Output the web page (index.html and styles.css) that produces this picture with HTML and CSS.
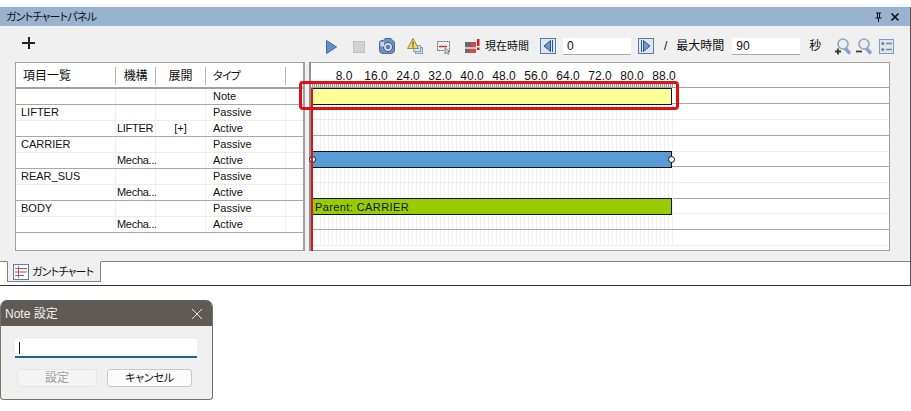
FILE: index.html
```html
<!DOCTYPE html>
<html lang="ja">
<head>
<meta charset="utf-8">
<title>ガントチャートパネル</title>
<link rel="stylesheet" href="styles.css">
</head>
<body>
<section class="panel">
  <header class="titlebar">
    <span class="kana">ガントチャートパネル</span>
    <span class="title-tools">
      <svg class="ic-pin" width="9" height="10" viewBox="0 0 9 10"><path d="M2 0.500h5v1h-1v4h1.500v1h-6v-1H3v-4H2zM4 1.500v4h1v-4zM4 6.500h1V10H4z" fill="#111"/></svg>
      <svg width="10" height="10" viewBox="0 0 10 10"><path d="M1.500 1.500l7 7M8.500 1.500l-7 7" stroke="#111" stroke-width="1.700" fill="none"/></svg>
    </span>
  </header>
  <div class="toolbar">
    <span class="plus"></span>
    <svg class="t-play" width="11" height="14" viewBox="0 0 11 14"><path d="M0.500 0.500L10.500 7 0.500 13.500z" fill="#5f8fc8" stroke="#3f6ea8"/></svg>
    <span class="t-stop"></span>
    <svg class="t-cam" width="16" height="16" viewBox="0 0 16 16"><path d="M0.500 5a2.500 2.500 0 0 1 2.500-2.500h1.500L6 0.500h6l1.500 2A2.500 2.500 0 0 1 15.500 5v7a3.500 3.500 0 0 1-3.500 3.500H4A3.500 3.500 0 0 1 0.500 12z" fill="#6f93bb" stroke="#4a6c94"/><circle cx="9" cy="9" r="4.500" fill="#d5e2f0" stroke="#34557d"/><circle cx="9" cy="9" r="2.300" fill="#5a7da6"/><rect x="1.500" y="4" width="3.500" height="4.500" fill="#c6d7ea"/></svg>
    <svg class="t-warn" width="16" height="16" viewBox="0 0 16 16"><rect x="8.500" y="9.500" width="7" height="6" fill="#c9d6ea" stroke="#8aa2c4"/><rect x="6.500" y="7.500" width="7" height="6" fill="#dbe4f2" stroke="#8aa2c4"/><path d="M6 0.500L11.500 10.500H0.500z" fill="#f6dc62" stroke="#9c8a3c"/><path d="M6 3.500v4M6 8v1.500" stroke="#333" fill="none"/></svg>
    <svg class="t-sel" width="15" height="15" viewBox="0 0 15 15"><rect x="0.500" y="1.500" width="12" height="9" fill="none" stroke="#667" stroke-dasharray="2 1"/><path d="M2 6.500h8" stroke="#d03030" stroke-width="1.500"/><path d="M8 8l0 6 1.500-1.500 1.500 2 1-.8-1.300-2H13z" fill="#ddd" stroke="#666" stroke-width=".7"/></svg>
    <svg class="t-flag" width="15" height="14" viewBox="0 0 15 14"><rect x="0" y="3" width="11" height="11" fill="#6a6a6a"/><rect x="6" y="3" width="5" height="5" fill="#d84848"/><rect x="0" y="8" width="11" height="2" fill="#c4c4c4"/><rect x="4" y="10" width="7" height="4" fill="#d84848"/><rect x="12" y="0" width="2.500" height="7" fill="#d02020"/><rect x="12" y="8.500" width="2.500" height="2.500" fill="#d02020"/></svg>
    <span class="t-label t-now">現在時間</span>
    <button class="stepper" type="button"><svg width="16" height="16" viewBox="0 0 16 16"><rect x="0.500" y="0.500" width="15" height="15" fill="#dfe6f0" stroke="#5c7ba8"/><path d="M10.500 2.500v11L4 8z" fill="#6f97c9" stroke="#2f568c"/><path d="M12.500 2v12" stroke="#2f568c"/></svg></button>
    <span class="field t-cur">0</span>
    <button class="stepper t-next" type="button"><svg width="16" height="16" viewBox="0 0 16 16"><rect x="0.500" y="0.500" width="15" height="15" fill="#dfe6f0" stroke="#5c7ba8"/><path d="M5.500 2.500v11L12 8z" fill="#6f97c9" stroke="#2f568c"/><path d="M3.500 2v12" stroke="#2f568c"/></svg></button>
    <span class="t-label t-slash">/</span>
    <span class="t-label t-max">最大時間</span>
    <span class="field t-maxv">90</span>
    <span class="t-label t-sec">秒</span>
    <svg class="t-zp" width="16" height="17" viewBox="0 0 16 17"><path d="M9.500 9.500l4.500 5" stroke="#7fa3d4" stroke-width="3.400" stroke-linecap="round"/><circle cx="8" cy="6" r="5" fill="#e6eef7" stroke="#98a4b0" stroke-width="1.600"/><path d="M0 13.500h6M3 10.500v6" stroke="#3a3a3a" stroke-width="1.800"/></svg>
    <svg class="t-zm" width="16" height="17" viewBox="0 0 16 17"><path d="M9.500 9.500l4.500 5" stroke="#7fa3d4" stroke-width="3.400" stroke-linecap="round"/><circle cx="8" cy="6" r="5" fill="#e6eef7" stroke="#98a4b0" stroke-width="1.600"/><path d="M0 13.500h6" stroke="#3a3a3a" stroke-width="1.800"/></svg>
    <svg class="t-list" width="15" height="15" viewBox="0 0 15 15"><rect x="0.500" y="0.500" width="14" height="14" fill="#dce6f3" stroke="#7f9cc4"/><circle cx="3.800" cy="4.500" r="1.600" fill="#7c8794"/><circle cx="3.800" cy="10.500" r="1.600" fill="#7c8794"/><path d="M7 4.500h6M7 10.500h6" stroke="#7c8794" stroke-width="1.400"/></svg>
  </div>
  <div class="split">
    <div class="grid-table">
      <div class="row head">
        <span class="c1 sep">項目一覧</span><span class="c2 sep">機構</span><span class="c3 sep">展開</span><span class="c4 sep kana">タイプ</span><span class="c5 sep"></span>
      </div>
      <div class="row major"><span class="c1"></span><span class="c2"></span><span class="c3"></span><span class="c4">Note</span><span class="c5"></span></div>
      <div class="row minor"><span class="c1">LIFTER</span><span class="c2"></span><span class="c3"></span><span class="c4">Passive</span><span class="c5"></span></div>
      <div class="row major"><span class="c1"></span><span class="c2">LIFTER</span><span class="c3 expand">[+]</span><span class="c4">Active</span><span class="c5"></span></div>
      <div class="row minor"><span class="c1">CARRIER</span><span class="c2"></span><span class="c3"></span><span class="c4">Passive</span><span class="c5"></span></div>
      <div class="row major"><span class="c1"></span><span class="c2">Mecha...</span><span class="c3"></span><span class="c4">Active</span><span class="c5"></span></div>
      <div class="row minor"><span class="c1">REAR_SUS</span><span class="c2"></span><span class="c3"></span><span class="c4">Passive</span><span class="c5"></span></div>
      <div class="row major"><span class="c1"></span><span class="c2">Mecha...</span><span class="c3"></span><span class="c4">Active</span><span class="c5"></span></div>
      <div class="row minor"><span class="c1">BODY</span><span class="c2"></span><span class="c3"></span><span class="c4">Passive</span><span class="c5"></span></div>
      <div class="row major"><span class="c1"></span><span class="c2">Mecha...</span><span class="c3"></span><span class="c4">Active</span><span class="c5"></span></div>
    </div>
    <div class="chart">
      <div class="ruler">
        <div class="ticks-labels"><span>8.0</span><span>16.0</span><span>24.0</span><span>32.0</span><span>40.0</span><span>48.0</span><span>56.0</span><span>64.0</span><span>72.0</span><span>80.0</span><span>88.0</span></div>
        <div class="ticks"></div>
      </div>
      <div class="track major nogrid"><div class="bar note"></div></div>
      <div class="track minor"></div>
      <div class="track major"></div>
      <div class="track minor"></div>
      <div class="track major"><div class="bar mech"><i class="knob knob-l"></i><i class="knob knob-r"></i></div></div>
      <div class="track minor"></div>
      <div class="track major"></div>
      <div class="track minor"><div class="bar body-bar">Parent: CARRIER</div></div>
      <div class="track major"></div>
      <div class="track minor"></div>
    </div>
    <div class="timeline"></div>
    <div class="highlight"></div>
  </div>
  <div class="tabbar">
    <div class="tab">
      <svg width="16" height="16" viewBox="0 0 16 16"><rect x="0.500" y="0.500" width="15" height="15" fill="#fff" stroke="#5c7ba8"/><path d="M2 4.500h5M6 4.500h8M2 8h12M2 11.500h9" stroke="#d04040"/><path d="M5.500 2v12" stroke="#5c7ba8"/></svg>
      <span class="kana">ガントチャート</span>
    </div>
  </div>
</section>
<section class="dialog">
  <header class="dlg-title">
    <span>Note 設定</span>
    <svg width="12" height="12" viewBox="0 0 12 12"><path d="M1 1l10 10M11 1L1 11" stroke="#e8e6e3" stroke-width="1" fill="none"/></svg>
  </header>
  <div class="dlg-body">
    <div class="dlg-input"><span class="caret"></span></div>
    <div class="dlg-buttons">
      <button class="dlg-btn disabled" type="button">設定</button>
      <button class="dlg-btn" type="button"><span class="kana btn-kana">キャンセル</span></button>
    </div>
  </div>
</section>
</body>
</html>
```

FILE: styles.css
```css
* { box-sizing: border-box; }
html, body { margin: 0; padding: 0; background: #fff; }
body {
  width: 911px;
  height: 411px;
  overflow: hidden;
  font: 12px/16px "Liberation Sans", "Noto Sans CJK JP", sans-serif;
  color: #111;
}
.kana {
  font-size: 11px;
  font-feature-settings: "palt";
  letter-spacing: -0.8px;
  white-space: nowrap;
}
.btn-kana { letter-spacing: -0.2px; }

.panel {
  margin-top: 7px;
  width: 911px;
  height: 279px;
  background: #f0f0f0;
  border-right: 1px solid #555;
  border-bottom: 1px solid #333;
  box-shadow: 0 -3px 0 #f6f6f6;
  display: flex;
  flex-direction: column;
}
.titlebar {
  height: 19px;
  flex: none;
  background: #98b3d0;
  display: flex;
  align-items: center;
  justify-content: space-between;
  padding: 0 10px 0 6px;
}
.title-tools { display: flex; align-items: center; gap: 7px; }

.toolbar {
  height: 36px;
  flex: none;
  display: flex;
  align-items: center;
  padding-top: 2px;
  font-size: 12px;
}
.plus {
  width: 13px;
  height: 12px;
  margin: -5px 0 0 22px;
  background:
    linear-gradient(#222, #222) center / 100% 2px no-repeat,
    linear-gradient(#222, #222) center / 2px 100% no-repeat;
}
.t-play { margin-left: 291px; margin-top: 4px; }
.t-stop {
  width: 12px;
  height: 12px;
  margin-left: 16px;
  margin-top: 4px;
  background: #d2d2d2;
  border: 1px solid #c0c0c0;
}
.t-cam { margin-left: 14px; margin-top: 2px; }
.t-warn { margin-left: 12px; margin-top: 1px; }
.t-sel { margin-left: 14px; margin-top: 4px; }
.t-flag { margin-left: 13px; margin-top: 2px; }
.t-label { white-space: nowrap; }
.t-now { margin-left: 5px; margin-top: 2px; font-size: 11px; }
.stepper {
  padding: 0;
  border: 0;
  background: none;
  width: 16px;
  height: 16px;
  display: block;
  margin-top: 2px;
}
.toolbar > .stepper:first-of-type { margin-left: 11px; }
.field {
  height: 17px;
  background: #fff;
  border-bottom: 1px solid #aaa;
  padding-left: 4px;
  line-height: 16px;
  margin-top: 2px;
}
.t-cur { width: 68px; margin-left: 7px; }
.t-next { margin-left: 7px; }
.t-slash { margin-left: 10px; margin-top: 2px; }
.t-max { margin-left: 9px; margin-top: 2px; }
.t-maxv { width: 68px; margin-left: 8px; }
.t-sec { margin-left: 9px; margin-top: 2px; }
.t-zp { margin-left: 14px; margin-top: 2px; }
.t-zm { margin-left: 5px; margin-top: 2px; }
.t-list { margin-left: 7px; margin-top: 2px; }

.split {
  position: relative;
  height: 189px;
  flex: none;
  display: flex;
  padding-left: 15px;
}
.grid-table {
  width: 290px;
  background: #fff;
  border: 1px solid #a0a0a0;
  border-right-width: 2px;
}
.row {
  display: grid;
  grid-template-columns: 100px 40px 50px 80px 1fr;
  height: 16px;
  align-items: center;
  border-bottom: 1px solid #a8a8a8;
  white-space: nowrap;
  font-size: 11px;
}
.row > span {
  height: 100%;
  line-height: 15px;
  border-right: 1px solid #efefef;
}
.row .c1 { padding-left: 5px; }
.row .c2 { padding-left: 1px; letter-spacing: -0.3px; }
.row .c3 { text-align: center; }
.row .c4 { padding-left: 7px; }
.row .c5 { border-right: 0; }
.row.minor { border-bottom-color: #ececec; }
.row.major { border-bottom-color: #a8a8a8; }
.row.head {
  height: 26px;
  border-bottom: 2px solid #a0a0a0;
  padding-top: 1px;
  font-size: 12px;
}
.row.head > span {
  height: 18px;
  line-height: 18px;
  margin-top: 1px;
  border-right: 1px solid #b4b4b4;
  text-align: left;
  padding-left: 7px;
}
.row.head .c1 { padding-left: 7px; }
.row.head .c2, .row.head .c3 { text-align: center; padding-left: 0; }
.row.head .c5 { border-right: 1px solid transparent; }

.chart {
  width: 581px;
  margin-left: 4px;
  background: #fff;
  border: 1px solid #a0a0a0;
  border-left: 2px solid #909090;
}
.ruler {
  height: 26px;
  border-bottom: 2px solid #a0a0a0;
  padding-top: 5px;
}
.ticks-labels {
  display: flex;
  padding-left: 17px;
  height: 15px;
  line-height: 17px;
}
.ticks-labels span { width: 32px; text-align: center; flex: none; }
.ticks {
  width: 361px;
  height: 4px;
  margin-left: 1px;
  background: repeating-linear-gradient(90deg, #9a9a9a 0 1px, #e4e4e4 1px 2px);
}
.track {
  height: 16px;
  padding-left: 1px;
  border-bottom: 1px solid #a8a8a8;
  background: repeating-linear-gradient(90deg, #f0f0f0 0 1px, #fff 1px 4px) 1px 0 / 361px 100% no-repeat;
}
.track.minor { border-bottom-color: #ececec; }
.track.major { border-bottom-color: #a8a8a8; }
.track.nogrid { background: #fff; }
.bar {
  position: relative;
  width: 360px;
  height: 17px;
  margin-top: -1px;
  border: 1px solid #111;
}
.bar.note { background: #ffff99; }
.bar.mech { background: #5b9bd5; }
.bar.body-bar {
  background: #99cc00;
  padding-left: 2px;
  line-height: 16px;
  font-size: 11px;
  letter-spacing: 0.4px;
}
.knob {
  position: absolute;
  top: 4px;
  width: 7px;
  height: 7px;
  border: 1px solid #111;
  border-radius: 50%;
  background: #fff;
}
.knob-l { left: -4px; }
.knob-r { right: -4px; }

.timeline {
  position: absolute;
  left: 311px;
  top: 26px;
  bottom: 0;
  width: 2px;
  background: #d81818;
}
.highlight {
  position: absolute;
  left: 299px;
  top: 19px;
  width: 380px;
  height: 29px;
  border: 3px solid #e01010;
  border-radius: 4px;
}

.tabbar {
  margin-top: 10px;
  flex: 1;
  background: #fff;
  border-top: 1px solid #808080;
  padding-left: 7px;
}
.tab {
  width: 94px;
  height: 21px;
  margin-top: -1px;
  background: #f0f0f0;
  border: 1px solid #808080;
  border-top-color: #f0f0f0;
  display: flex;
  align-items: center;
  gap: 3px;
  padding-left: 5px;
}

.dialog {
  margin-top: 14px;
  width: 213px;
  height: 100px;
  border-radius: 7px 7px 4px 4px;
  overflow: hidden;
  background: #f0f0f0;
  border: 1px solid #77726e;
  border-top: 0;
}
.dlg-title {
  height: 26px;
  padding: 1px 9px 0 4px;
  background: #5f5a55;
  color: #f2f0ee;
  display: flex;
  align-items: center;
  justify-content: space-between;
}
.dlg-body { padding: 13px 15px 0 14px; }
.dlg-input {
  height: 19px;
  background: #fff;
  border-bottom: 2px solid #1c6390;
  padding: 3px 0 0 4px;
}
.caret {
  display: block;
  width: 1px;
  height: 12px;
  background: #111;
}
.dlg-buttons {
  display: flex;
  gap: 10px;
  margin-top: 11px;
  padding-left: 2px;
}
.dlg-btn {
  width: 85px;
  height: 18px;
  padding: 0;
  font: inherit;
  color: #111;
  background: #fbfbfb;
  border: 1px solid #c8c8c8;
  border-radius: 3px;
}
.dlg-btn.disabled {
  width: 80px;
  color: #a0a0a0;
  background: #f4f4f4;
  border-color: #e6e6e6;
}
```
